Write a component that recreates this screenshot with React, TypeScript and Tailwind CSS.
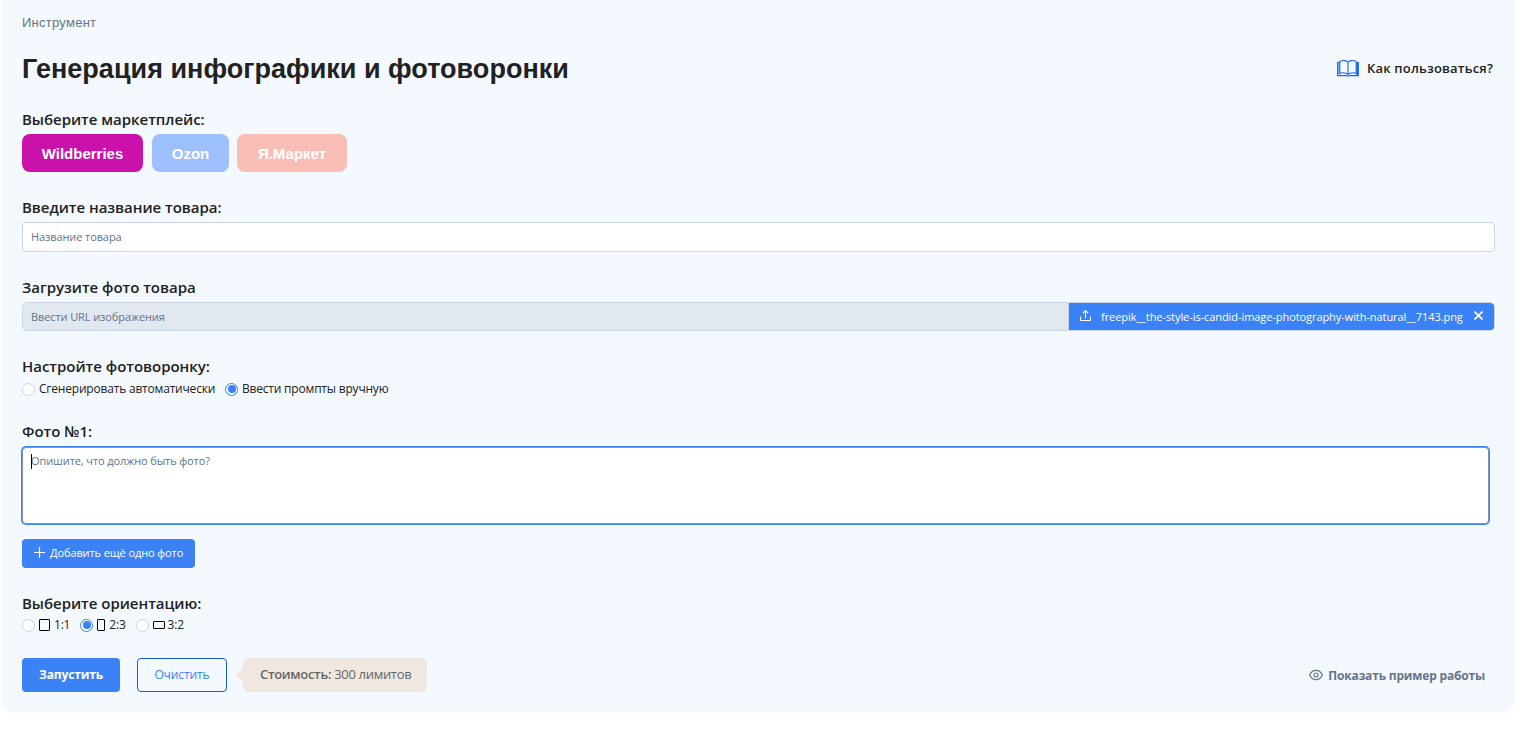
import React, { useState } from "react";

const marketplaces = [
	{ name: "Wildberries", className: "w-[121px] bg-[#cb11ab] mr-[9px]" },
	{ name: "Ozon", className: "w-[77px] bg-[#9fc0ff] mr-2" },
	{ name: "Я.Маркет", className: "w-[110px] bg-[#f8beb5]" },
];

const orientations = [
	{ value: "1:1", icon: "w-[11px] h-3 mr-1", label: "mr-[10px]" },
	{ value: "2:3", icon: "w-2 h-3 mr-1", label: "mr-[10px]" },
	{ value: "3:2", icon: "w-3 h-2 mr-[3px]", label: "" },
];

const labelClass = "text-[15px] leading-5 font-semibold tracking-[-0.03px] whitespace-nowrap";

type RadioProps = {
	name: string;
	checked: boolean;
	onChange: () => void;
	className?: string;
	children: React.ReactNode;
};

const Radio = ({ name, checked, onChange, className = "", children }: RadioProps) => {
	return (
		<label className={`flex items-center whitespace-nowrap ${className}`}>
			<input type="radio" name={name} checked={checked} onChange={onChange} className="sr-only" />
			<span
				className={`flex items-center justify-center size-[13px] mr-1 shrink-0 rounded-full border bg-white ${
					checked ? "border-[#3b82f6]" : "border-[#cbd5e1]"
				}`}
			>
				{checked && <span className="size-[8px] rounded-full bg-[#3b82f6]" />}
			</span>
			{children}
		</label>
	);
};

const BookIcon = () => (
	<svg width="22" height="17" viewBox="0 0 22 17" fill="none" stroke="#1565f5" strokeWidth="1.1">
		<path d="M.5 2.5h2.3v12H.5z" fill="#8db8ff" stroke="none" />
		<path d="M11 2.2C8.8.3 5.2.3 2.8 1.6v11.8c2.6-1 6-.8 8.2 1 2.2-1.8 5.6-2 8.2-1V1.6C16.8.3 13.2.3 11 2.2zM11 2.2v12.2" />
		<path d="M2.8 2.5H.6v13.1h8.9c.8.6 2.2.6 3 0h8.8V2.5h-2.1" />
		<path d="M20.4 2.5v12.9" strokeWidth="2" />
	</svg>
);

const App = () => {
	const [mode, setMode] = useState("manual");
	const [orientation, setOrientation] = useState("2:3");

	return (
		<main className="ml-[2px] w-[1513px] h-[712px] rounded-b-[10px] bg-[#f4f9ff] pl-5 pr-5 pt-[13px] text-[#212121] font-['Open_Sans',sans-serif]">
			<p className="h-5 text-[13px] leading-5 text-[#64748b] font-['Liberation_Sans',sans-serif] tracking-[0.26px]">
				Инструмент
			</p>
			<header className="mt-5 h-8 flex items-center justify-between">
				<h1 className="text-[27px] leading-8 font-bold tracking-[0.02px] whitespace-nowrap font-['Liberation_Sans',sans-serif]">
					Генерация инфографики и фотоворонки
				</h1>
				<a
					href="#"
					className="flex items-center gap-2 mr-[2px] mt-[-2px] text-[13px] leading-5 font-semibold tracking-[0.18px] whitespace-nowrap"
				>
					<BookIcon />
					Как пользоваться?
				</a>
			</header>

			<div className="mt-6">
				<p className={labelClass}>Выберите маркетплейс:</p>
				<div className="flex mt-[5px]">
					{marketplaces.map((item) => (
						<button
							key={item.name}
							className={`h-[38px] rounded-[8px] text-[15px] font-bold text-white pt-[2px] font-['Liberation_Sans',sans-serif] ${item.className}`}
						>
							{item.name}
						</button>
					))}
				</div>
			</div>

			<div className="mt-[25px]">
				<p className={labelClass}>Введите название товара:</p>
				<input
					placeholder="Название товара"
					className="block mt-[5px] h-[30px] w-full rounded-[4px] border border-[#cbd5e1] bg-white px-2 pb-[2px] text-[11px] tracking-[-0.1px] placeholder:text-[#64748b] outline-none"
				/>
			</div>

			<div className="mt-[25px]">
				<p className={labelClass}>Загрузите фото товара</p>
				<div className="mt-[5px] h-[29px] flex rounded-[5px] border border-[#cbd5e1] bg-[#e1e8f0] overflow-hidden">
					<input
						placeholder="Ввести URL изображения"
						disabled
						className="flex-1 px-2 pt-[2px] text-[11px] tracking-[-0.1px] placeholder:text-[#64748b]"
					/>
					<div className="flex items-center w-[426px] border-l border-[#cbd5e1] bg-[#3b82f6] pl-[11px] text-[11px] text-white whitespace-nowrap">
						<svg
							width="11"
							height="11"
							viewBox="0 0 11 11"
							fill="none"
							stroke="white"
							strokeWidth="1.1"
							className="mr-[10px] mb-[2px]"
						>
							<path d="M.5 6.5v4h10v-4M5.5 8V1M3 3l2.5-2.3L8 3" />
						</svg>
						<span className="w-[364px] pt-[2px] tracking-[-0.07px]">
							freepik__the-style-is-candid-image-photography-with-natural__7143.png
						</span>
						<svg width="9" height="9" viewBox="0 0 9 9" stroke="white" strokeWidth="1.6" className="ml-[9px] mb-[2px]">
							<path d="M.5.5l8 8M8.5.5l-8 8" />
						</svg>
					</div>
				</div>
			</div>

			<div className="mt-[25px]">
				<p className={labelClass}>Настройте фотоворонку:</p>
				<div className="flex mt-1 h-[18px] text-xs leading-[18px] tracking-[-0.2px]">
					<Radio name="mode" checked={mode === "auto"} onChange={() => setMode("auto")} className="mr-[10px]">
						<span className="w-[176px]">Сгенерировать автоматически</span>
					</Radio>
					<Radio name="mode" checked={mode === "manual"} onChange={() => setMode("manual")}>
						Ввести промпты вручную
					</Radio>
				</div>
			</div>

			<div className="mt-[23px]">
				<p className={labelClass}>Фото №1:</p>
				<div className="relative mt-[5px] ml-[-1px] w-[1469px] rounded-[5px] bg-[#3b82f6] p-px">
					<textarea
						autoFocus
						placeholder="Опишите, что должно быть фото?"
						className="block h-[77px] w-full resize-none rounded-[4px] border border-[#7c95bd] bg-white px-2 py-1 text-[11px] leading-[18px] tracking-[-0.1px] caret-transparent placeholder:text-[#64748b] outline-none"
					/>
					<span className="absolute left-[10px] top-2 h-[15px] w-px bg-black" />
				</div>
			</div>
			<button className="flex items-center mt-[14px] h-[29px] w-[173px] rounded-[4px] bg-[#3b82f6] pl-3 text-[11px] tracking-[-0.1px] text-white whitespace-nowrap">
				<svg width="11" height="11" viewBox="0 0 11 11" stroke="white" strokeWidth="1.2" className="mr-[5px] mb-[2px]">
					<path d="M5.5 0v11M0 5.5h11" />
				</svg>
				Добавить ещё одно фото
			</button>

			<div className="mt-[25px]">
				<p className={labelClass}>Выберите ориентацию:</p>
				<div className="flex mt-[3px] h-[18px] text-xs leading-[18px] tracking-[-0.2px]">
					{orientations.map((item) => (
						<Radio
							key={item.value}
							name="orientation"
							checked={orientation === item.value}
							onChange={() => setOrientation(item.value)}
							className={item.label}
						>
							<span className={`rounded-[1px] border border-black ${item.icon}`} />
							{item.value}
						</Radio>
					))}
				</div>
			</div>

			<footer className="mt-6 h-[34px] flex items-center">
				<button className="h-[34px] w-[98px] rounded-[4px] bg-[#3b82f6] text-xs font-bold tracking-[-0.15px] text-white">
					Запустить
				</button>
				<button className="ml-[17px] h-[34px] w-[90px] rounded-[4px] border border-[#175cd3] text-xs tracking-[-0.1px] text-[#3b82f6]">
					Очистить
				</button>
				<div className="ml-[9px] flex items-center">
					<span className="border-y-[7px] border-y-transparent border-r-[7px] border-r-[#f0e8e0]" />
					<p className="h-[34px] w-[184px] rounded-[6px] bg-[#f0e8e0] pl-[17px] text-[13px] leading-[33px] tracking-[-0.32px] text-[#666] whitespace-nowrap">
						<span className="font-semibold">Стоимость:</span> 300 лимитов
					</p>
				</div>
				<button className="ml-auto mr-[10px] flex items-center gap-[5px] text-xs font-bold tracking-[-0.18px] text-[#64748b] whitespace-nowrap">
					<svg width="14" height="12" viewBox="0 0 14 12" fill="none" stroke="#64748b" strokeWidth="1.2">
						<path d="M.7 6C3.3-.2 10.7-.2 13.3 6 10.7 12.2 3.3 12.2.7 6z" />
						<circle cx="7" cy="6" r="2" />
					</svg>
					<span className="pt-[2px]">Показать пример работы</span>
				</button>
			</footer>
		</main>
	);
};

export default App;
